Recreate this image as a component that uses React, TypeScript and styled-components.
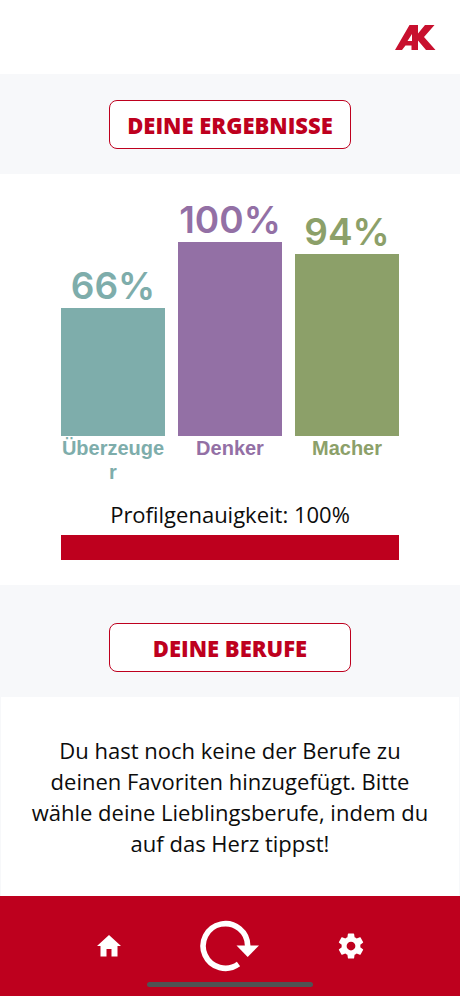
import React from "react";
import styled, { createGlobalStyle } from "styled-components";

const RED = "#be001e";
const SANS = '"Open Sans", "Noto Sans", sans-serif';
const CHART_HEIGHT = 194;

const GlobalStyle = createGlobalStyle`
  *, *::before, *::after { box-sizing: border-box; }
  body { margin: 0; background: #fff; color: #0c0c0c; font-family: ${SANS}; }
  button { font: inherit; cursor: pointer; }
`;

const Page = styled.div`
  display: flex;
  flex-direction: column;
  min-height: 100vh;
`;

const Header = styled.header`
  display: flex;
  justify-content: flex-end;
  padding: 25px 24px 24px;
`;

const LogoLink = styled.a`
  display: block;
  color: #c8102e;
  svg { display: block; }
`;

const Main = styled.main`
  display: flex;
  flex: 1;
  flex-direction: column;
`;

const Band = styled.section<{ $roomy?: boolean }>`
  display: flex;
  justify-content: center;
  padding: ${(p) => (p.$roomy ? "38px 24px 25px" : "26px 24px 25px")};
  background: #f7f8fa;
`;

const BandTitle = styled.h2`
  display: flex;
  align-items: center;
  justify-content: center;
  width: 242px;
  height: 49px;
  margin: 0;
  border: 1px solid ${RED};
  border-radius: 8px;
  background: #fff;
  color: ${RED};
  font-size: 22px;
  font-weight: 800;
  line-height: 30px;
`;

const Results = styled.section`
  padding: 22px 61px 25px;
`;

const Chart = styled.div`
  display: grid;
  grid-template-columns: repeat(3, minmax(0, 1fr));
  column-gap: 13px;
`;

const Column = styled.div<{ $color: string }>`
  display: grid;
  grid-template-rows: 240px auto;
  color: ${(p) => p.$color};
  text-align: center;
`;

const BarArea = styled.div`
  display: flex;
  flex-direction: column;
  justify-content: flex-end;
`;

const Percent = styled.div`
  display: flex;
  justify-content: center;
  font-family: Inter, sans-serif;
  font-size: 37px;
  font-weight: 600;
  line-height: 45px;
  white-space: nowrap;
`;

const Bar = styled.div`
  flex-shrink: 0;
  background: currentColor;
`;

const Label = styled.div`
  font-family: "Liberation Sans", Arial, sans-serif;
  font-size: 20px;
  font-weight: 700;
  line-height: 24px;
  overflow-wrap: anywhere;
`;

const Accuracy = styled.label`
  display: block;
  margin-top: 15px;
  font-size: 22px;
  line-height: 30px;
  text-align: center;
`;

const AccuracyBar = styled.progress`
  display: block;
  width: 100%;
  height: 25px;
  margin-top: 6px;
  border: 0;
  appearance: none;
  background: #eceef1;
  &::-webkit-progress-bar { background: #eceef1; }
  &::-webkit-progress-value { background: ${RED}; }
  &::-moz-progress-bar { background: ${RED}; }
`;

const Empty = styled.section`
  flex: 1;
  padding: 38px 24px 37px;
  border: solid #f7f8fa;
  border-width: 0 1px;
`;

const EmptyText = styled.p`
  margin: 0;
  font-size: 22px;
  line-height: 31px;
  text-align: center;
`;

const NavBar = styled.nav`
  position: sticky;
  bottom: 0;
  display: flex;
  flex-direction: column;
  align-items: center;
  padding-bottom: 9px;
  background: ${RED};
`;

const NavItems = styled.div`
  display: grid;
  grid-template-columns: repeat(3, 121px);
  justify-content: center;
  height: 86px;
  padding-top: 14px;
`;

const NavButton = styled.button`
  display: flex;
  align-items: center;
  justify-content: center;
  padding: 0;
  border: 0;
  background: none;
  color: #fff;
`;

const HomeIndicator = styled.div`
  width: 36%;
  height: 5px;
  border-radius: 3px;
  background: #505254;
`;

const Logo = () => (
  <svg width="41" height="25" viewBox="0 0 41 25" fill="currentColor" aria-hidden="true">
    <path fillRule="evenodd" d="M14.5 0H23V8.5L30 0H39.5L29 12L40.5 25H31L23 15.5V25H16.5V20.5H10.5L7 25H0ZM17 9L12.5 16H17Z" />
  </svg>
);

const HomeIcon = () => (
  <svg width="24" height="22" viewBox="0 0 24 22" fill="currentColor" aria-hidden="true">
    <path d="M12 0L24 11H20.5V21.5H14.5V14H9.5V21.5H3.5V11H0Z" />
  </svg>
);

const RestartIcon = () => (
  <svg width="60" height="52" viewBox="0 0 60 52" aria-hidden="true">
    <path d="M38.5 44A22.3 22.3 0 1 1 47.7 26" fill="none" stroke="currentColor" strokeWidth="5.6" />
    <path d="M36.5 25.5H59L47.7 37Z" fill="currentColor" />
  </svg>
);

const GearIcon = () => (
  <svg width="30" height="30" viewBox="0 0 24 24" fill="currentColor" aria-hidden="true">
    <path d="M19.43 12.98c.04-.32.07-.64.07-.98s-.03-.66-.07-.98l2.11-1.65c.19-.15.24-.42.12-.64l-2-3.46c-.12-.22-.39-.3-.61-.22l-2.49 1c-.52-.4-1.08-.73-1.69-.98l-.38-2.65A.488.488 0 0 0 14 2h-4c-.25 0-.46.18-.49.42l-.38 2.65c-.61.25-1.17.59-1.69.98l-2.49-1c-.23-.09-.49 0-.61.22l-2 3.46c-.13.22-.07.49.12.64l2.11 1.65c-.04.32-.07.65-.07.98s.03.66.07.98l-2.11 1.65c-.19.15-.24.42-.12.64l2 3.46c.12.22.39.3.61.22l2.49-1c.52.4 1.08.73 1.69.98l.38 2.65c.03.24.24.42.49.42h4c.25 0 .46-.18.49-.42l.38-2.65c.61-.25 1.17-.59 1.69-.98l2.49 1c.23.09.49 0 .61-.22l2-3.46c.12-.22.07-.49-.12-.64l-2.11-1.65zM12 15.5a3.5 3.5 0 1 1 0-7 3.5 3.5 0 0 1 0 7z" />
  </svg>
);

const results = [
  { label: "Überzeuger", value: 66, color: "#7eadab" },
  { label: "Denker", value: 100, color: "#9370a5" },
  { label: "Macher", value: 94, color: "#8ca069" },
];

export default function App() {
  return (
    <Page lang="de">
      <GlobalStyle />
      <Header>
        <LogoLink href="#" aria-label="AK">
          <Logo />
        </LogoLink>
      </Header>
      <Main>
        <Band>
          <BandTitle>DEINE ERGEBNISSE</BandTitle>
        </Band>
        <Results>
          <Chart>
            {results.map((r) => (
              <Column key={r.label} $color={r.color}>
                <BarArea>
                  <Percent>{r.value}%</Percent>
                  <Bar style={{ height: Math.round((CHART_HEIGHT * r.value) / 100) }} />
                </BarArea>
                <Label>{r.label}</Label>
              </Column>
            ))}
          </Chart>
          <Accuracy htmlFor="accuracy">Profilgenauigkeit: 100%</Accuracy>
          <AccuracyBar id="accuracy" value={100} max={100} />
        </Results>
        <Band $roomy>
          <BandTitle>DEINE BERUFE</BandTitle>
        </Band>
        <Empty>
          <EmptyText>
            Du hast noch keine der Berufe zu deinen Favoriten hinzugefügt. Bitte wähle deine
            Lieblingsberufe, indem du auf das Herz tippst!
          </EmptyText>
        </Empty>
      </Main>
      <NavBar>
        <NavItems>
          <NavButton type="button" aria-label="Startseite"><HomeIcon /></NavButton>
          <NavButton type="button" aria-label="Neu starten"><RestartIcon /></NavButton>
          <NavButton type="button" aria-label="Einstellungen"><GearIcon /></NavButton>
        </NavItems>
        <HomeIndicator />
      </NavBar>
    </Page>
  );
}
